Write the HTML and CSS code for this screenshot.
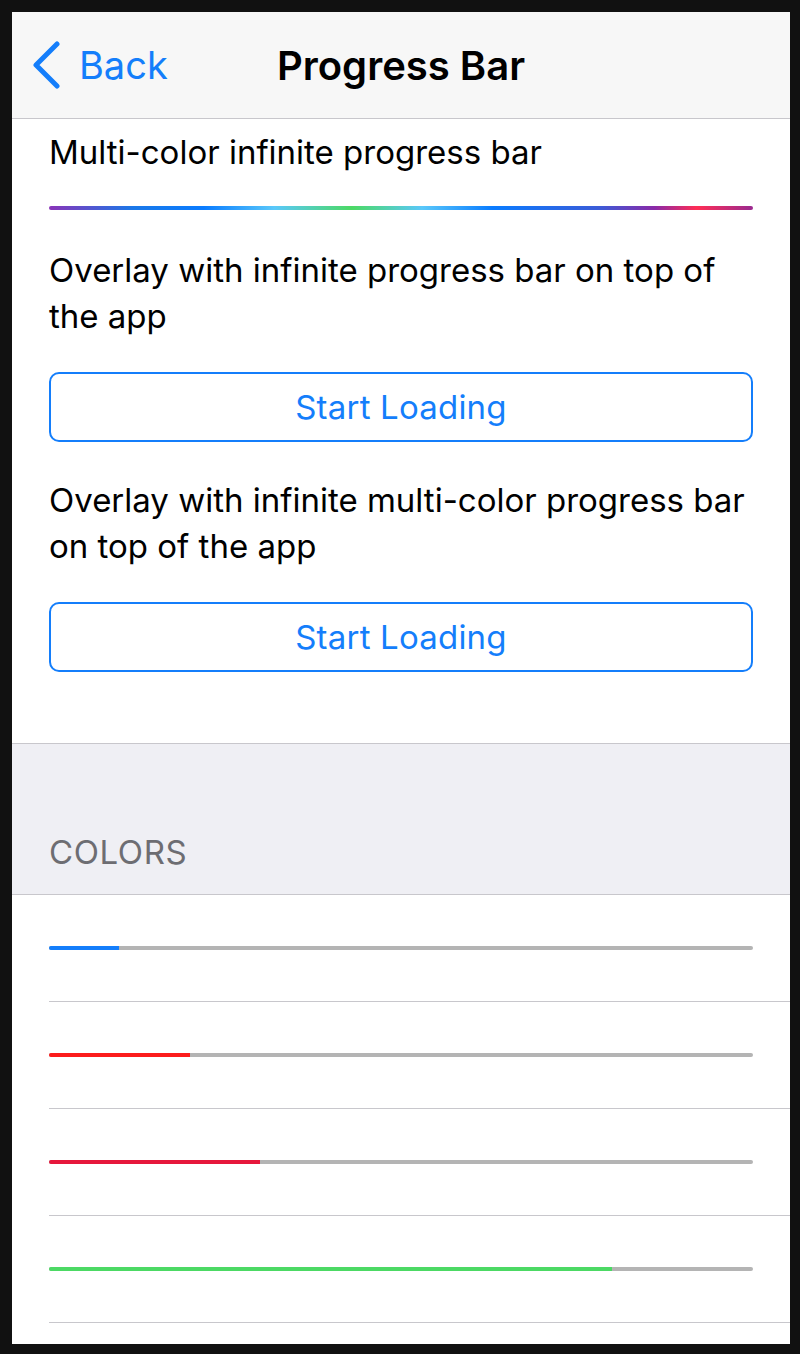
FILE: index.html
```html
<!DOCTYPE html>
<html lang="en">
<head>
  <meta charset="UTF-8">
  <meta name="viewport" content="width=device-width, initial-scale=1.0">
  <link rel="stylesheet" href="styles.css">
  <title>Progress Bar</title>
</head>
<body>
  <div class="screen">
    <div class="navbar">
      <a class="back" href="#">
        <svg class="chevron" width="28" height="48" viewBox="0 0 28 48">
          <path d="M25 3 L4 24 L25 45" fill="none" stroke="#147efb" stroke-width="5" stroke-linecap="round" stroke-linejoin="round"/>
        </svg>
        <span>Back</span>
      </a>
      <h1 class="title">Progress Bar</h1>
      <div></div>
    </div>

    <div class="content">
      <p class="label first">Multi-color infinite progress bar</p>
      <div class="rainbow"></div>

      <p class="label second">Overlay with infinite progress bar on top of the app</p>
      <button class="btn">Start Loading</button>

      <p class="label third">Overlay with infinite multi-color progress bar on top of the app</p>
      <button class="btn">Start Loading</button>
    </div>

    <div class="section-header">COLORS</div>

    <div class="list">
      <div class="row"><div class="track"><div class="fill blue" style="width: 10%"></div></div></div>
      <div class="row"><div class="track"><div class="fill red" style="width: 20%"></div></div></div>
      <div class="row"><div class="track"><div class="fill crimson" style="width: 30%"></div></div></div>
      <div class="row"><div class="track"><div class="fill green" style="width: 80%"></div></div></div>
    </div>
  </div>
</body>
</html>
```

FILE: styles.css
```css
body {
  margin: 0;
  background-color: #111;
  font-family: Inter, "Liberation Sans", sans-serif;
}

.screen {
  width: 778px;
  height: 1332px;
  margin: 12px 10px 10px 12px;
  background-color: #fff;
  overflow: hidden;
}

.navbar {
  height: 106px;
  background-color: #f7f7f7;
  border-bottom: 1px solid #c8c7cc;
  display: grid;
  grid-template-columns: 1fr auto 1fr;
  align-items: center;
}

.back {
  display: flex;
  align-items: center;
  gap: 19px;
  padding-left: 20px;
  color: #147efb;
  text-decoration: none;
  font-size: 38px;
}

.chevron {
  display: block;
}

.title {
  margin: 0;
  font-size: 40px;
  font-weight: 600;
  color: #000;
}

.content {
  padding: 10px 37px 71px;
}

.label {
  margin: 0;
  font-size: 33px;
  line-height: 46px;
  color: #000;
}

.second {
  margin-top: 37px;
}

.third {
  margin-top: 35px;
}

.rainbow {
  height: 4px;
  margin-top: 31px;
  border-radius: 2px;
  background: linear-gradient(to right,
    #8a34b8 0%, #1a78e8 12%, #0a7cff 22%, #5ac8fa 32%, #4cd964 43%,
    #5ac8fa 53%, #0a7cff 63%, #3a5cd8 78%, #8a2aa8 86%, #ff2d55 92%, #9a2a90 100%);
}

.btn {
  display: block;
  width: 100%;
  height: 70px;
  margin-top: 33px;
  border: 2px solid #147efb;
  border-radius: 10px;
  background: #fff;
  color: #147efb;
  font-family: inherit;
  font-size: 33px;
  letter-spacing: 0.2px;
}

.section-header {
  height: 152px;
  box-sizing: border-box;
  padding: 88px 37px 0;
  background-color: #efeff4;
  border-top: 1px solid #c8c7cc;
  border-bottom: 1px solid #c8c7cc;
  color: #6d6d72;
  font-size: 33px;
  letter-spacing: 0.6px;
}

.row {
  height: 106px;
  margin-left: 37px;
  padding-right: 37px;
  border-bottom: 1px solid #c8c7cc;
  display: flex;
  align-items: center;
}

.track {
  flex: 1;
  height: 4px;
  border-radius: 2px;
  background-color: #b4b4b4;
  overflow: hidden;
}

.fill {
  height: 100%;
}

.blue { background-color: #147efb; }
.red { background-color: #fc1c1c; }
.crimson { background-color: #e6173c; }
.green { background-color: #4cd964; }
```
